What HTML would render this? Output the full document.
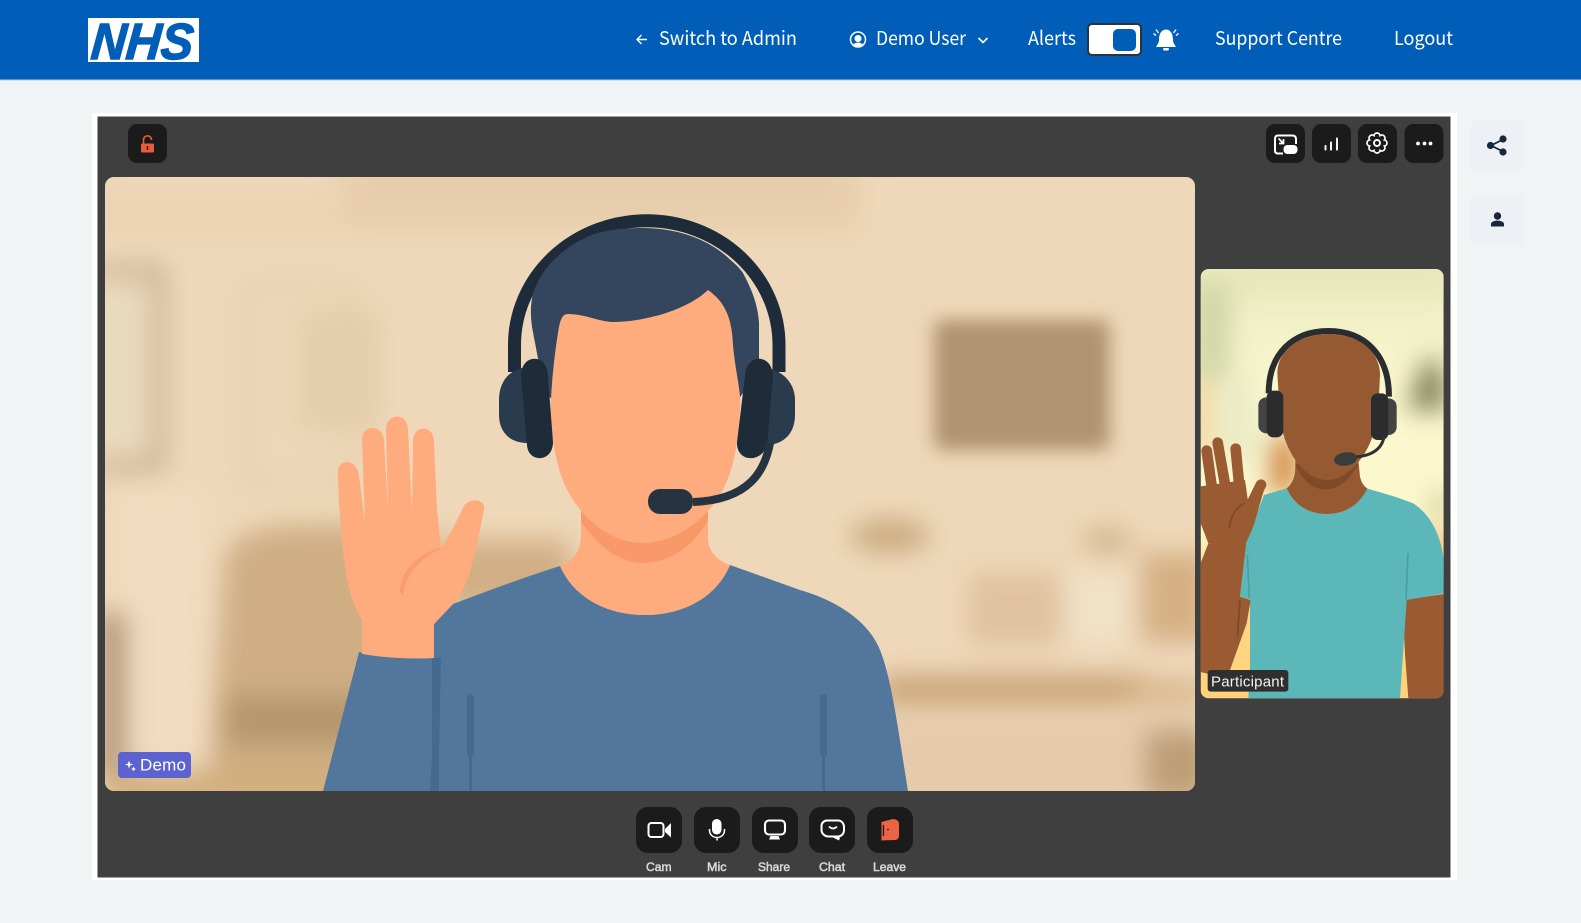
<!DOCTYPE html>
<html lang="en">
<head>
<meta charset="utf-8">
<title>NHS Video Consultation</title>
<style>
html,body{margin:0;padding:0;width:1581px;height:923px;overflow:hidden;background:#F0F4F5}
svg{display:block;position:absolute;left:0;top:0}
.h{font-family:"Noto Sans CJK JP","Liberation Sans",sans-serif;font-size:19px;fill:#fff}
.l{font-family:"Liberation Sans",sans-serif;font-size:11.5px;fill:#d8d8d8;stroke:#d8d8d8;stroke-width:.5;text-anchor:start}
</style>
</head>
<body>
<svg width="1581" height="923" viewBox="0 0 1581 923" xmlns="http://www.w3.org/2000/svg">
<defs>
<clipPath id="cm"><rect x="105" y="177" width="1090" height="614" rx="9"/></clipPath>
<clipPath id="cp"><rect x="32" y="27" width="729" height="1288" rx="24"/></clipPath>
<filter id="b8" x="-30%" y="-30%" width="160%" height="160%"><feGaussianBlur stdDeviation="13"/></filter>
<filter id="b9" x="-30%" y="-30%" width="160%" height="160%"><feGaussianBlur stdDeviation="9"/></filter>
<filter id="b5" x="-30%" y="-30%" width="160%" height="160%"><feGaussianBlur stdDeviation="38"/></filter>
<linearGradient id="pbg" x1="0" y1="0" x2="0" y2="1">
<stop offset="0" stop-color="#ecebc2"/><stop offset=".3" stop-color="#fbf8cf"/><stop offset=".6" stop-color="#fdf7cc"/><stop offset=".72" stop-color="#fcd98c"/><stop offset="1" stop-color="#ffd27a"/>
</linearGradient>
</defs>

<!-- page -->
<rect width="1581" height="923" fill="#F0F4F5"/>
<rect width="1581" height="79.500" fill="#005EB8"/>
<rect y="79.500" width="1581" height="1" fill="#b7c9dc"/>

<!-- NHS logo -->
<rect x="88" y="18" width="111" height="44" fill="#fff"/>
<text x="90" y="59" transform="translate(5.160,0) skewX(-5)" font-family="Liberation Sans,sans-serif" font-weight="700" font-style="italic" font-size="51" fill="#005EB8" stroke="#005EB8" stroke-width="1.400" textLength="102" lengthAdjust="spacingAndGlyphs">NHS</text>

<!-- header nav -->
<path d="M647,39.500H637M641.500,35L637,39.500L641.500,44" fill="none" stroke="#fff" stroke-width="1.400"/>
<text class="h" x="659" y="45" textLength="138" lengthAdjust="spacingAndGlyphs">Switch to Admin</text>
<circle cx="858" cy="39.500" r="7.500" fill="none" stroke="#fff" stroke-width="1.500"/>
<circle cx="858" cy="38.500" r="3.500" fill="#fff"/>
<path d="M852.500,45Q858,40 863.500,45Q858,48 852.500,45Z" fill="#fff"/>
<text class="h" x="876" y="45" textLength="90" lengthAdjust="spacingAndGlyphs">Demo User</text>
<path d="M978.500,38l4.500,4.500l4.500,-4.500" fill="none" stroke="#fff" stroke-width="1.600"/>
<text class="h" x="1028" y="45" textLength="48" lengthAdjust="spacingAndGlyphs">Alerts</text>
<rect x="1088" y="24" width="53" height="31" rx="4" fill="#fff" stroke="#2f3337" stroke-width="2"/>
<rect x="1113" y="29" width="23" height="22" rx="5" fill="#005EB8"/>
<path d="M1166,29.500C1160,30 1159,36 1159,40C1159,43 1157,45 1156,47H1176C1175,45 1173,43 1173,40C1173,36 1172,30 1166,29.500Z" fill="#fff"/>
<rect x="1163" y="48" width="6" height="2.500" rx="1.200" fill="#fff"/>
<path d="M1158.500,33l-2.500,-3.500M1156,35.500l-2.500,-2M1173.500,33l2.500,-3.500M1176,35.500l2.500,-2" stroke="#e6eef8" stroke-width="1.500" fill="none"/>
<text class="h" x="1215" y="45" textLength="127" lengthAdjust="spacingAndGlyphs">Support Centre</text>
<text class="h" x="1394" y="45" textLength="59" lengthAdjust="spacingAndGlyphs">Logout</text>

<!-- panel -->
<rect x="92" y="113" width="1365" height="767" fill="#fff"/>
<rect x="97.500" y="116.500" width="1353" height="761" fill="#3f3f3f"/>

<!-- top buttons -->
<rect x="128" y="124" width="39" height="39" rx="9" fill="#1b1b1b"/>
<rect x="141" y="143.500" width="13" height="9" rx="1.500" fill="#e85c3c"/>
<path d="M143.500,143.500V140C143.500,134.500 151.500,134.500 151.500,140" fill="none" stroke="#e85c3c" stroke-width="1.600"/>
<rect x="146.800" y="146" width="1.400" height="4" fill="#1b1b1b"/>

<rect x="1266" y="124" width="39" height="39" rx="9" fill="#1b1b1b"/>
<rect x="1312" y="124" width="39" height="39" rx="9" fill="#1b1b1b"/>
<rect x="1358" y="124" width="39" height="39" rx="9" fill="#1b1b1b"/>
<rect x="1404.500" y="124" width="39" height="39" rx="9" fill="#1b1b1b"/>
<path d="M1283,153.500H1278Q1275,153.500 1275,150.500V139Q1275,135.500 1278,135.500H1292Q1296,135.500 1296,139V144" fill="none" stroke="#fff" stroke-width="2"/>
<rect x="1283.500" y="145" width="14" height="9" rx="4" fill="#fff"/>
<path d="M1278.500,138.500L1283,143M1283.500,139V143.500H1279" fill="none" stroke="#fff" stroke-width="1.700"/>
<rect x="1324.500" y="145" width="2" height="5.500" rx=".8" fill="#f2f2f2"/>
<rect x="1330" y="141.500" width="2" height="9" rx=".8" fill="#f2f2f2"/>
<rect x="1336" y="137.500" width="2" height="13" rx=".8" fill="#f2f2f2"/>
<path d="M1384.390,146.060A3.100,3.100 0 0 1 1380.060,150.390A3.100,3.100 0 0 1 1373.940,150.390A3.100,3.100 0 0 1 1369.610,146.060A3.100,3.100 0 0 1 1369.610,139.940A3.100,3.100 0 0 1 1373.940,135.610A3.100,3.100 0 0 1 1380.060,135.610A3.100,3.100 0 0 1 1384.390,139.940A3.100,3.100 0 0 1 1384.390,146.060Z" fill="none" stroke="#fff" stroke-width="1.700"/>
<circle cx="1377" cy="143" r="3" fill="none" stroke="#fff" stroke-width="1.900"/>
<circle cx="1418" cy="143.500" r="1.900" fill="#fff"/><circle cx="1424.500" cy="143.500" r="1.900" fill="#fff"/><circle cx="1430.500" cy="143.500" r="1.900" fill="#fff"/>

<!-- main video -->
<g clip-path="url(#cm)">
<rect x="105" y="177" width="1090" height="614" fill="#eed8b9"/>
<g filter="url(#b8)">
<rect x="340" y="160" width="520" height="70" fill="#e7cdab"/>
<rect x="95" y="195" width="250" height="40" fill="#ebd3b3"/>
<path d="M95,272H158V465H95" fill="#eadabd" stroke="#c2a585" stroke-width="12"/>
<rect x="245" y="285" width="110" height="200" fill="#ecd7b8" stroke="#e2cba9" stroke-width="6"/>
<rect x="300" y="310" width="80" height="120" fill="#e3cdac"/>
<rect x="115" y="490" width="90" height="280" fill="#f2dcc1"/>
<path d="M225,555Q240,525 300,525H430V810H205Z" fill="#cfae84"/>
<rect x="225" y="695" width="210" height="50" fill="#b6976d"/>
<rect x="100" y="612" width="26" height="170" fill="#ad8e70"/>
<rect x="110" y="770" width="310" height="40" fill="#d2ae7c"/>
<rect x="440" y="540" width="130" height="70" fill="#d1af85"/>
<rect x="880" y="570" width="320" height="110" fill="#efd8ba"/>
<rect x="967" y="572" width="95" height="74" fill="#e0c29e"/>
<rect x="1067" y="572" width="62" height="72" fill="#f1e2c8"/>
<rect x="1140" y="553" width="70" height="90" fill="#d5b084"/>
<ellipse cx="890" cy="536" rx="40" ry="17" fill="#c9aa7e"/>
<ellipse cx="1107" cy="541" rx="26" ry="13" fill="#d0b48c"/>
<rect x="880" y="674" width="270" height="30" fill="#c9a272"/>
<rect x="1130" y="680" width="75" height="24" fill="#d6b486"/>
<rect x="880" y="715" width="320" height="90" fill="#e5cbac"/>
<rect x="1145" y="730" width="65" height="70" fill="#bd9e76"/>
</g>
<rect x="934" y="320" width="176" height="130" rx="6" fill="#b0936f" filter="url(#b9)"/>

<!-- shirt -->
<path d="M434,624L453,604C490,590 525,577 560,566C575,600 610,615 645,615C680,615 715,600 730,565L800,590C835,600 868,620 880,650C892,680 898,730 908,791H323L359,652C390,658 410,659 434,658Z" fill="#52769c"/>
<path d="M432,658H441L439,757V791H430L432,757Z" fill="#456a8f"/>
<rect x="467" y="694" width="7" height="63" rx="3.500" fill="#456a8f"/>
<rect x="469" y="757" width="3" height="34" fill="#456a8f"/>
<rect x="820" y="694" width="7" height="63" rx="3.500" fill="#456a8f"/>
<rect x="822" y="757" width="3" height="34" fill="#456a8f"/>

<!-- hand -->
<path d="M338,472C338,458 357,458 359,476L365,523L362,440C362,424 383,424 384,440L388,512L386,430C386,412 408,412 408,430L412,511L413,442C413,424 434,424 434,442L437,510L441,548C447,540 455,525 462,510C466,497 486,497 484,510C480,530 475,555 469,575C464,590 458,598 453,604L434,624V658C410,659 385,658 362,654V620C350,600 346,580 343,550C340,520 338,495 338,472Z" fill="#feac7e"/>
<path d="M441,548C420,552 400,570 400,592L403,596C405,575 420,558 441,549Z" fill="#f99d70"/>

<!-- neck, headset, face -->
<path d="M581,500H708V540Q710,558 730,565C715,600 680,615 645,615C610,615 575,600 560,566Q581,558 581,535Z" fill="#feac7e"/>
<path d="M581,505V522C600,548 620,563 643,563C670,563 695,545 708,520V505Z" fill="#f99869"/>
<path d="M514.500,372V345A132,124 0 0 1 779,345V372" fill="none" stroke="#1d2b3a" stroke-width="13"/>
<path d="M554,402L544,390L532,327C530,312 531,302 533,293C540,275 548,265 557,257C570,245 583,238 597,233C612,229 628,228 643,228C675,228 705,238 725,255C733,262 740,268 743,273C752,290 758,305 759,323V370L738,400Z" fill="#34465d"/>
<path d="M568,314C585,314 600,322 613,322C640,322 685,312 708,290C725,302 732,318 733,345C735,370 742,395 740,410C738,440 735,470 720,495C705,520 675,543 643,543C610,543 585,520 570,495C555,470 550,430 551,400C552,375 556,345 558,333C560,320 562,314 568,314Z" fill="#feac7e"/>
<path d="M522,368C506,372 499,385 499,400V415C499,432 510,443 527,443H530V368Z" fill="#2a3b4e"/>
<path d="M521,376C521,353 548,353 548,376L553,442C553,463 528,463 527,445Z" fill="#1e2c3a"/>
<path d="M768,368C785,372 795,385 795,400V415C795,432 785,445 765,445Z" fill="#2a3b4e"/>
<path d="M737,442L745,376C746,353 772,353 773,376L767,445C762,463 736,463 737,442Z" fill="#1e2c3a"/>
<path d="M770,443C765,470 750,500 693,502" fill="none" stroke="#263442" stroke-width="8"/>
<rect x="648" y="489" width="45" height="25" rx="12" fill="#263442"/>
</g>

<!-- Demo tag -->
<rect x="118" y="752" width="73" height="26" rx="4" fill="#5c62d0"/>
<path d="M129,760.500L130,763.500L133,764.500L130,765.500L129,768.500L128,765.500L125,764.500L128,763.500Z" fill="#fff"/>
<path d="M133.500,766.500L134.300,768.200L136,769L134.300,769.800L133.500,771.500L132.700,769.800L131,769L132.700,768.200Z" fill="#fff"/>
<text x="140" y="770.500" font-family="Liberation Sans,sans-serif" font-size="17" fill="#fff" textLength="46">Demo</text>

<!-- participant -->
<g transform="translate(1190,260) scale(.33333)">
<g clip-path="url(#cp)">
<rect x="32" y="27" width="729" height="1288" fill="url(#pbg)"/>
<g filter="url(#b5)">
<rect x="10" y="60" width="110" height="300" fill="#cfd6a6"/>
<rect x="120" y="10" width="660" height="90" fill="#e6e6b8"/>
<rect x="10" y="360" width="50" height="230" fill="#ecc78c"/>
<rect x="90" y="350" width="110" height="260" fill="#e9ebc6"/>
<rect x="240" y="530" width="80" height="170" fill="#cf8440"/>
<path d="M650,450L705,300H750L775,450Z" fill="#7d7d52"/>
<rect x="730" y="700" width="40" height="70" fill="#b5b580"/>
<rect x="710" y="810" width="60" height="130" fill="#f0b468"/>
</g>
<path d="M640,1020L761,1002V1315H655C650,1240 640,1150 640,1020Z" fill="#9a5a32"/>
<path d="M290,685L222,705L170,840L150,1010L180,1018V1220L175,1315H630L650,1020L761,1000V900C755,840 730,770 670,730C625,712 575,698 530,685C505,740 460,762 410,762C360,762 315,740 290,685Z" fill="#5cb8b8"/>
<path d="M172,885L178,1015M654,880L648,1018" stroke="#4a9ea0" stroke-width="5" fill="none"/>
<path d="M20,940L55,850L170,840L150,1010L182,1020L170,1090L120,1230L90,1250L32,1236H20Z" fill="#9a5a32"/>
<path d="M25,680L165,660L175,730L200,700L225,680L190,800L170,845L55,850L32,790Z" fill="#9a5a32"/>
<g stroke="#9a5a32" stroke-width="32" stroke-linecap="round" fill="none">
<path d="M50,572L68,700M83,548L108,690M137,566L150,700"/>
<path d="M213,674L178,745"/>
</g>
<path d="M165,730Q125,745 118,805" stroke="#7d4a28" stroke-width="5" fill="none"/>
<path d="M150,1020L142,1130" stroke="#7d4a28" stroke-width="5" fill="none"/>
<path d="M316,600H505L510,650Q515,675 532,685C505,740 460,762 410,762C360,762 315,740 290,685Q316,665 316,620Z" fill="#965a32"/>
<path d="M316,612C340,670 375,688 405,688C445,688 480,660 505,612Z" fill="#7f4a28"/>
<path d="M236,400C236,280 310,213 415,213C520,213 597,280 597,410" fill="none" stroke="#2a2c30" stroke-width="18"/>
<path d="M262,340C262,270 330,222 415,222C500,222 570,270 570,345L565,450C555,570 480,660 410,660C340,660 280,570 270,470Z" fill="#965a32"/>
<rect x="205" y="412" width="50" height="108" rx="24" fill="#444"/>
<rect x="230" y="392" width="50" height="140" rx="20" fill="#2c2c2e"/>
<rect x="570" y="415" width="50" height="110" rx="24" fill="#444"/>
<rect x="543" y="400" width="52" height="140" rx="20" fill="#2c2c2e"/>
<path d="M582,530Q572,590 480,592" fill="none" stroke="#2f3234" stroke-width="9"/>
<ellipse cx="467" cy="597" rx="35" ry="20" transform="rotate(-8 467 597)" fill="#3a3c3c"/>
</g>
<rect x="53" y="1230" width="242" height="65" rx="9" fill="#2f2f2f"/>
</g>
<text x="1211" y="686.500" font-family="Liberation Sans,sans-serif" font-size="15" fill="#f2f2f2" textLength="73">Participant</text>

<!-- bottom buttons -->
<rect x="636" y="807" width="46" height="46" rx="12" fill="#1b1b1b"/>
<rect x="694" y="807" width="46" height="46" rx="12" fill="#1b1b1b"/>
<rect x="752" y="807" width="46" height="46" rx="12" fill="#1b1b1b"/>
<rect x="809" y="807" width="46" height="46" rx="12" fill="#1b1b1b"/>
<rect x="867" y="807" width="46" height="46" rx="12" fill="#1b1b1b"/>

<rect x="648.500" y="823" width="15" height="14" rx="3" fill="none" stroke="#fff" stroke-width="2"/>
<path d="M665,829L671,823V837.500L665,832Z" fill="#fff"/>

<rect x="712" y="819" width="9.500" height="15.500" rx="4.700" fill="#fff"/>
<path d="M709.500,829V830C709.500,840 724.500,840 724.500,830V829M717,837V840.500" fill="none" stroke="#fff" stroke-width="1.500"/>

<rect x="765" y="820.500" width="20" height="14" rx="4" fill="none" stroke="#fff" stroke-width="2.100"/>
<path d="M770.500,836H778.500L780,839.500H769Z" fill="#fff"/>

<path d="M827,820.500H838C842,820.500 844,824 844,827V830C844,834 841,836.500 838,836.500H829C824,836.500 821.500,833 821.500,830V826C821.500,823 824,820.500 827,820.500Z" fill="none" stroke="#fff" stroke-width="2"/>
<path d="M829,826.500Q833,830.500 837,826.500" fill="none" stroke="#fff" stroke-width="1.600"/>
<path d="M833,837.500H840L839,840.500Z" fill="#fff"/>

<path d="M881.500,822L893,819Q899,819.500 899,824V836Q899,839.500 895,840L881.500,840.500Z" fill="#ec6444"/>
<rect x="882.800" y="825" width="1.300" height="11" fill="#1b1b1b"/>
<circle cx="888" cy="829.500" r=".9" fill="#1b1b1b"/>

<text class="l" x="646" y="871" textLength="25.500" lengthAdjust="spacingAndGlyphs">Cam</text>
<text class="l" x="707" y="871" textLength="19.500" lengthAdjust="spacingAndGlyphs">Mic</text>
<text class="l" x="758" y="871" textLength="32" lengthAdjust="spacingAndGlyphs">Share</text>
<text class="l" x="819" y="871" textLength="26" lengthAdjust="spacingAndGlyphs">Chat</text>
<text class="l" x="873" y="871" textLength="33" lengthAdjust="spacingAndGlyphs">Leave</text>

<!-- side buttons -->
<rect x="1470" y="119" width="54" height="53" rx="8" fill="#edf1f6"/>
<rect x="1470" y="194" width="54" height="52" rx="8" fill="#edf1f6"/>
<path d="M1503,139.500L1491,145.500L1503,151.500" fill="none" stroke="#16283a" stroke-width="1.800"/>
<circle cx="1503" cy="139" r="3.600" fill="#16283a"/>
<circle cx="1490.500" cy="145.500" r="3.600" fill="#16283a"/>
<circle cx="1503" cy="152" r="3.600" fill="#16283a"/>
<circle cx="1497.500" cy="216" r="3.700" fill="#16283a"/>
<path d="M1491,226.500V224C1491,219.500 1504,219.500 1504,224V226.500Z" fill="#16283a"/>
</svg>
</body>
</html>
